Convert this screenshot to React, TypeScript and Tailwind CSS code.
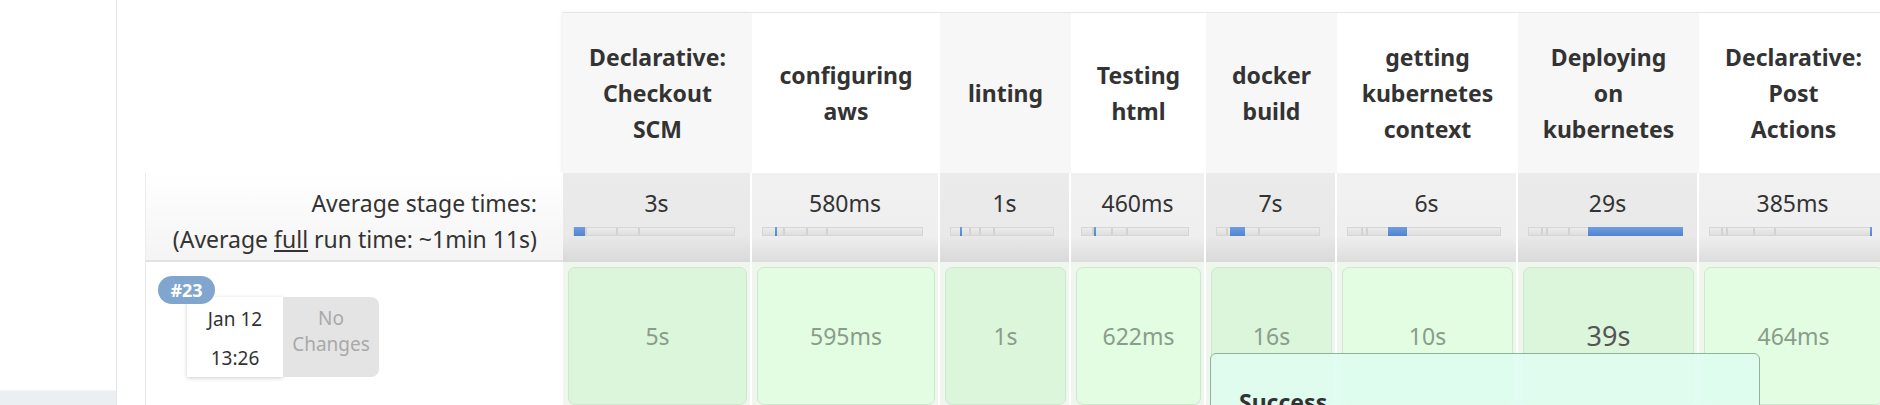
import React from "react";

type Seg = { left: number; width: number };

type Stage = {
  lines: string[];
  width: string;
  avg: string;
  bar: number;
  blue: Seg;
  ticks: number[];
  run: string;
  big?: boolean;
  dark: boolean;
};

const stages: Stage[] = [
  { lines: ["Declarative:", "Checkout", "SCM"], width: "w-[189px]", avg: "3s", bar: 162, blue: { left: 0, width: 11 }, ticks: [11, 42, 64], run: "5s", dark: true },
  { lines: ["configuring", "aws"], width: "w-[188px]", avg: "580ms", bar: 161, blue: { left: 12, width: 2 }, ticks: [20, 43, 63], run: "595ms", dark: false },
  { lines: ["linting"], width: "w-[131px]", avg: "1s", bar: 104, blue: { left: 9, width: 2 }, ticks: [18, 28, 42], run: "1s", dark: true },
  { lines: ["Testing", "html"], width: "w-[135px]", avg: "460ms", bar: 108, blue: { left: 12, width: 2 }, ticks: [10, 29, 44], run: "622ms", dark: false },
  { lines: ["docker", "build"], width: "w-[131px]", avg: "7s", bar: 104, blue: { left: 13, width: 15 }, ticks: [9, 41], run: "16s", dark: true },
  { lines: ["getting", "kubernetes", "context"], width: "w-[181px]", avg: "6s", bar: 154, blue: { left: 40, width: 19 }, ticks: [13, 18], run: "10s", dark: false },
  { lines: ["Deploying", "on", "kubernetes"], width: "w-[181px]", avg: "29s", bar: 154, blue: { left: 59, width: 95 }, ticks: [12, 17, 39], run: "39s", big: true, dark: true },
  { lines: ["Declarative:", "Post", "Actions"], width: "w-[189px]", avg: "385ms", bar: 162, blue: { left: 160, width: 2 }, ticks: [11, 16, 43, 64], run: "464ms", dark: false },
];

const Bar = ({ s }: { s: Stage }) => (
  <div
    className="relative ml-[10px] h-[9px] border border-[#d6d6d6] bg-gradient-to-b from-[#ececec] to-[#dedede]"
    style={{ width: s.bar }}
  >
    {s.ticks.map((t) => (
      <div key={t} className="absolute top-0 h-full w-[2px] bg-[#d2d2d2]" style={{ left: t }} />
    ))}
    <div
      className="absolute top-[-1px] h-[9px] bg-gradient-to-b from-[#6f9de0] to-[#4f84cf]"
      style={{ left: s.blue.left, width: s.blue.width }}
    />
  </div>
);

const App = () => {
  return (
    <div className="relative flex h-[405px] w-[1880px] overflow-hidden bg-white font-['Noto_Sans',sans-serif] text-[#333]">
      <aside className="flex w-[117px] shrink-0 flex-col justify-end border-r border-[#e6e6e6]">
        <div className="h-[15px] border-t border-[#f3f5f6] bg-[#eceff1]" />
      </aside>

      <main className="min-w-0 flex-1 pl-[28px] pt-[12px]">
        {/* header row */}
        <div className="flex h-[161px]">
          <div className="w-[418px] shrink-0" />
          {stages.map((s, i) => (
            <div
              key={i}
              className={`${s.width} flex shrink-0 flex-col items-center justify-center border-t border-[#e6e6e6] text-center text-[23px] font-bold leading-[36px] ${s.dark ? "bg-[#f7f7f7]" : "bg-white"} ${i === 0 ? "shadow-[-2px_0_3px_rgba(0,0,0,0.06)]" : ""}`}
            >
              {s.lines.map((l) => (
                <span key={l}>{l}</span>
              ))}
            </div>
          ))}
        </div>

        {/* average row */}
        <div className="flex h-[89px]">
          <div className="w-[418px] shrink-0 border-b-2 border-l border-b-[#e2e2e2] border-l-[#ececec] bg-gradient-to-b from-white to-[#f4f4f4] pr-[26px] pt-[12px] text-right text-[23px] leading-[36px]">
            <div>Average stage times:</div>
            <div>
              (Average <span className="underline">full</span> run time: ~1min 11s)
            </div>
          </div>
          {stages.map((s, i) => (
            <div
              key={i}
              className={`${s.width} shrink-0 border-r-2 border-white bg-gradient-to-b pt-[12px] text-center text-[23px] leading-[36px] ${s.dark ? "from-[#ebebeb] via-[#e9e9e9] via-70% to-[#d9d9d9]" : "from-[#f1f1f1] via-[#efefef] via-70% to-[#dddddd]"}`}
            >
              <div>{s.avg}</div>
              <div className="mt-[6px]">
                <Bar s={s} />
              </div>
            </div>
          ))}
        </div>

        {/* build row */}
        <div className="flex h-[160px]">
          <div className="relative w-[418px] shrink-0 border-l border-[#e6e6e6] pl-[41px] pt-[35px]">
            <div className="absolute left-[12px] top-[14px] flex h-[28px] w-[57px] items-center justify-center rounded-full bg-[#80a6d0] text-[18px] font-bold text-white">
              #23
            </div>
            <div className="flex h-[80px]">
              <div className="flex w-[96px] flex-col items-center bg-white pt-[3px] text-[19px] leading-[39px] text-[#333] shadow-[0_1px_4px_rgba(0,0,0,0.2)]">
                <span>Jan 12</span>
                <span>13:26</span>
              </div>
              <div className="flex w-[96px] flex-col items-center rounded-r-[8px] bg-[#e4e4e4] pt-[8px] text-[19px] leading-[26px] text-[#a9a9a9]">
                <span>No</span>
                <span>Changes</span>
              </div>
            </div>
          </div>
          {stages.map((s, i) => (
            <div key={i} className={`${s.width} shrink-0 border-r-2 border-white bg-[#eef6ee] pl-[5px] pr-[3px] pt-[5px]`}>
              <div
                className={`flex h-[138px] items-center justify-center rounded-[7px] border border-[#cfe6cf] ${s.dark ? "bg-[#dcf6dc]" : "bg-[#e2fde2]"} ${s.big ? "text-[27px] text-[#555]" : "text-[23px] text-[#8a9c8a]"}`}
              >
                {s.run}
              </div>
            </div>
          ))}
        </div>
      </main>

      <div className="absolute left-[1210px] top-[353px] h-[120px] w-[550px] rounded-[6px] border border-[#8db59a] bg-[#dffdf0]/90 pl-[28px] pt-[30px]">
        <div className="text-[23px] font-bold leading-[36px] text-[#333]">Success</div>
      </div>
    </div>
  );
};

export default App;
